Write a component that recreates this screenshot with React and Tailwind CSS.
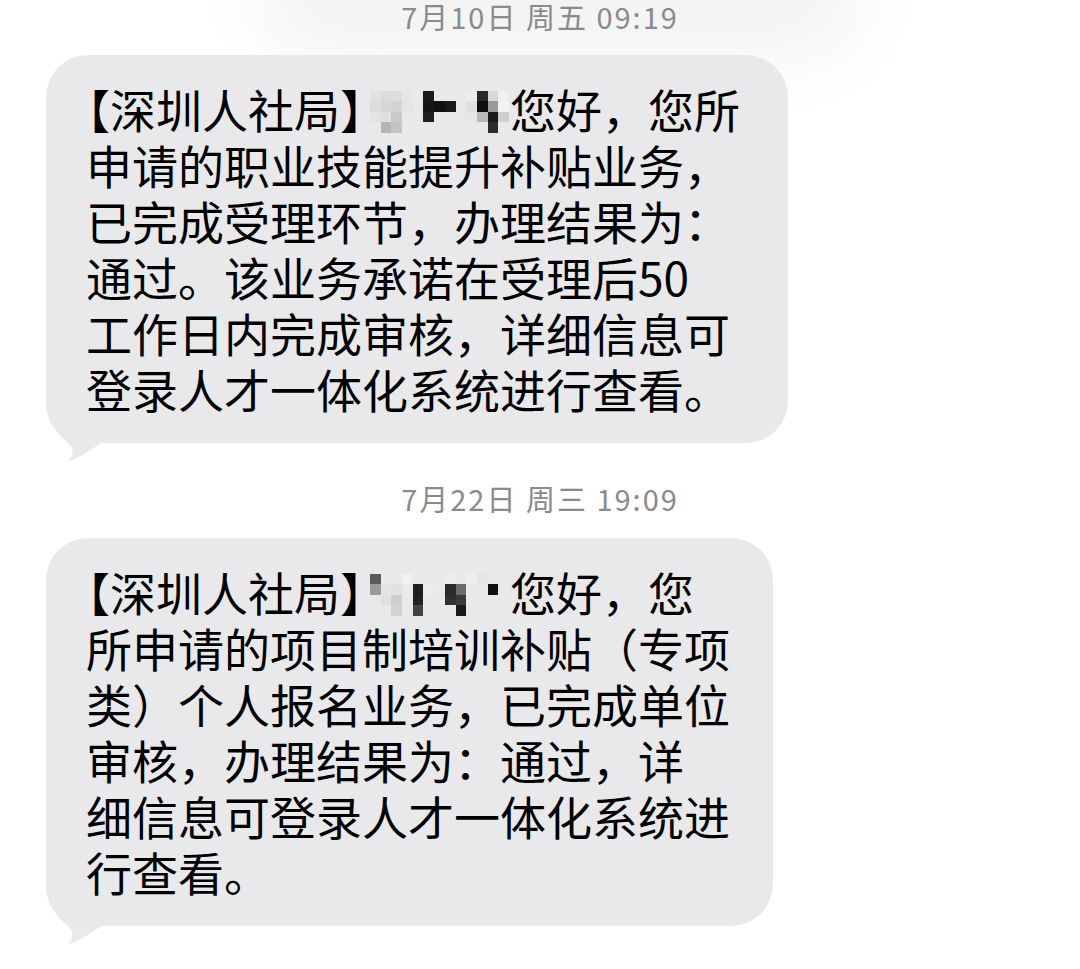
import React from 'react';

const font = { fontFamily: '"Noto Sans CJK SC", "Noto Sans", sans-serif' };

// blurred name: rows of cell colours ('' = bubble colour)
const mosaicA = [
  ['#e2e2e2', '#dcdcdc', '#dedede', '#e6e6e6', '', '#1c1c1c', '', '', '', '#ececec', '#2a2a2a', '#d8d8d8', '#f0f0f0'],
  ['#dcdcdc', '#d6d6d6', '#d4d4d4', '#e4e4e4', '', '#161616', '#111111', '#1a1a1a', '', '#e0e0e0', '#0e0e0e', '#9a9a9a', '#f2f2f2'],
  ['#e4e4e4', '#e0e0e0', '#c9c9c9', '#e8e8e8', '', '#202020', '', '', '', '#e6e6e6', '#b8b8b8', '#1a1a1a', '#cfcfcf'],
  ['', '#b4b4b4', '#c4c4c4', '', '', '', '', '', '', '', '', '#2c2c2c', ''],
];

const mosaicB = [
  ['#5a5a5a', '', '', '#f0f0f0', '', '', '', '#ececec', '', '#eeeeee', '#e6e6e6', '', ''],
  ['#9a9a9a', '#e4e4e4', '#e2e2e2', '', '#1e1e1e', '#ececec', '', '#2a2a2a', '#6a6a6a', '', '', '#111111', ''],
  ['', '#e0e0e0', '#cfcfcf', '', '#222222', '', '', '#303030', '#3a3a3a', '', '', '', ''],
  ['', '', '#d2d2d2', '', '#444444', '', '', '', '#1a1a1a', '', '', '', ''],
];

function Mosaic({ rows }) {
  return (
    <span className="inline-block align-middle h-[42px] w-[140px] -ml-[16px] -mt-[8px]">
      <span className="grid grid-cols-[repeat(13,10.7px)] auto-rows-[10.5px]">
        {rows.flat().map((c, i) => (
          <span key={i} style={{ backgroundColor: c || '#e9e9eb' }} />
        ))}
      </span>
    </span>
  );
}

function Tail() {
  return (
    <svg className="absolute left-0 bottom-[-22px]" width="90" height="85" viewBox="0 0 90 85">
      <path
        d="M0,0 L0,25 C0,36 7,51 22,63 C28,68 28,75 22,81 C34,78 45,70 55,63 L88,63 L88,0 Z"
        fill="#e9e9eb"
      />
    </svg>
  );
}

function Bubble({ width, children }) {
  return (
    <div className={`relative ${width} rounded-[42px] bg-[#e9e9eb] pl-[40px] pr-4 pt-[25px] pb-[27px]`}>
      <Tail />
      <div className="relative text-[46px] leading-[56px] text-black whitespace-nowrap">{children}</div>
    </div>
  );
}

function Stamp({ children }) {
  return (
    <div className="text-center text-[29px] leading-[32px] tracking-[2px] text-[#8a8a8e]">{children}</div>
  );
}

export default function App() {
  return (
    <div className="relative w-[1080px] h-[969px] overflow-hidden bg-white" style={font}>
      <div className="absolute left-[260px] top-[-60px] w-[600px] h-[110px] rounded-full bg-[#f1f1f1] blur-2xl" />
      <div className="relative pl-[46px]">
        <div className="pt-0 pb-[23px] -ml-[46px]">
          <Stamp>7月10日 周五 09:19</Stamp>
        </div>
        <Bubble width="w-[742px]">
          <div className="h-[56px] -ml-[22px]">【深圳人社局】<Mosaic rows={mosaicA} />您好，您所</div>
          <div>申请的职业技能提升补贴业务，</div>
          <div>已完成受理环节，办理结果为：</div>
          <div>通过。该业务承诺在受理后50</div>
          <div>工作日内完成审核，详细信息可</div>
          <div>登录人才一体化系统进行查看。</div>
        </Bubble>
        <div className="pt-[39px] pb-[24px] -ml-[46px]">
          <Stamp>7月22日 周三 19:09</Stamp>
        </div>
        <Bubble width="w-[727px]">
          <div className="h-[56px] -ml-[22px]">【深圳人社局】<Mosaic rows={mosaicB} />您好，您</div>
          <div>所申请的项目制培训补贴（专项</div>
          <div>类）个人报名业务，已完成单位</div>
          <div>审核，办理结果为：通过，详</div>
          <div>细信息可登录人才一体化系统进</div>
          <div>行查看。</div>
        </Bubble>
      </div>
    </div>
  );
}
